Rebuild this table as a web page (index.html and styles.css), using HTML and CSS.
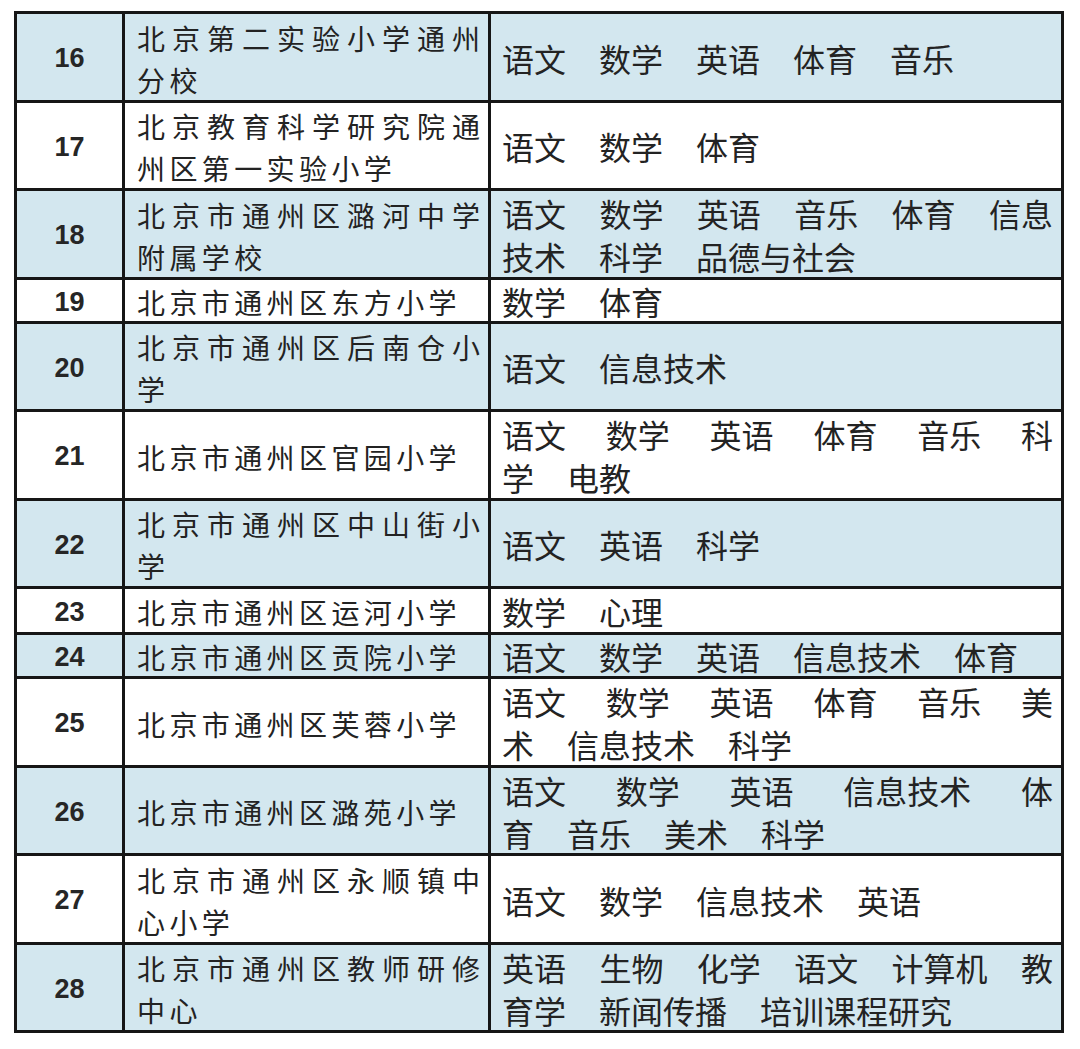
FILE: index.html
```html
<!DOCTYPE html>
<html lang="zh-CN">
<head>
<meta charset="utf-8">
<title>通州区学校学科表</title>
<link rel="stylesheet" href="styles.css">
</head>
<body>
<div class="sheet">
  <div class="c num b">16</div>
  <div class="c name b"><span class="jl">北京第二实验小学通州</span><span class="ln">分校</span></div>
  <div class="c subj b"><div class="sl"><span>语文</span><span>数学</span><span>英语</span><span>体育</span><span>音乐</span></div></div>

  <div class="c num w">17</div>
  <div class="c name w"><span class="jl">北京教育科学研究院通</span><span class="ln">州区第一实验小学</span></div>
  <div class="c subj w"><div class="sl"><span>语文</span><span>数学</span><span>体育</span></div></div>

  <div class="c num b">18</div>
  <div class="c name b"><span class="jl">北京市通州区潞河中学</span><span class="ln">附属学校</span></div>
  <div class="c subj b"><div class="sl j"><span>语文</span><span>数学</span><span>英语</span><span>音乐</span><span>体育</span><span>信息</span></div><div class="sl"><span>技术</span><span>科学</span><span>品德与社会</span></div></div>

  <div class="c num w">19</div>
  <div class="c name w"><span class="ln">北京市通州区东方小学</span></div>
  <div class="c subj w"><div class="sl"><span>数学</span><span>体育</span></div></div>

  <div class="c num b">20</div>
  <div class="c name b"><span class="jl">北京市通州区后南仓小</span><span class="ln">学</span></div>
  <div class="c subj b"><div class="sl"><span>语文</span><span>信息技术</span></div></div>

  <div class="c num w">21</div>
  <div class="c name w"><span class="ln">北京市通州区官园小学</span></div>
  <div class="c subj w"><div class="sl j"><span>语文</span><span>数学</span><span>英语</span><span>体育</span><span>音乐</span><span>科</span></div><div class="sl"><span>学</span><span>电教</span></div></div>

  <div class="c num b">22</div>
  <div class="c name b"><span class="jl">北京市通州区中山街小</span><span class="ln">学</span></div>
  <div class="c subj b"><div class="sl"><span>语文</span><span>英语</span><span>科学</span></div></div>

  <div class="c num w">23</div>
  <div class="c name w"><span class="ln">北京市通州区运河小学</span></div>
  <div class="c subj w"><div class="sl"><span>数学</span><span>心理</span></div></div>

  <div class="c num b">24</div>
  <div class="c name b"><span class="ln">北京市通州区贡院小学</span></div>
  <div class="c subj b"><div class="sl"><span>语文</span><span>数学</span><span>英语</span><span>信息技术</span><span>体育</span></div></div>

  <div class="c num w">25</div>
  <div class="c name w"><span class="ln">北京市通州区芙蓉小学</span></div>
  <div class="c subj w"><div class="sl j"><span>语文</span><span>数学</span><span>英语</span><span>体育</span><span>音乐</span><span>美</span></div><div class="sl"><span>术</span><span>信息技术</span><span>科学</span></div></div>

  <div class="c num b">26</div>
  <div class="c name b"><span class="ln">北京市通州区潞苑小学</span></div>
  <div class="c subj b"><div class="sl j"><span>语文</span><span>数学</span><span>英语</span><span>信息技术</span><span>体</span></div><div class="sl"><span>育</span><span>音乐</span><span>美术</span><span>科学</span></div></div>

  <div class="c num w">27</div>
  <div class="c name w"><span class="jl">北京市通州区永顺镇中</span><span class="ln">心小学</span></div>
  <div class="c subj w"><div class="sl"><span>语文</span><span>数学</span><span>信息技术</span><span>英语</span></div></div>

  <div class="c num b">28</div>
  <div class="c name b"><span class="jl">北京市通州区教师研修</span><span class="ln">中心</span></div>
  <div class="c subj b"><div class="sl j"><span>英语</span><span>生物</span><span>化学</span><span>语文</span><span>计算机</span><span>教</span></div><div class="sl"><span>育学</span><span>新闻传播</span><span>培训课程研究</span></div></div>
</div>
</body>
</html>
```

FILE: styles.css
```css
html, body {
  margin: 0;
  padding: 0;
  background: #ffffff;
}

body {
  font-family: "Noto Sans CJK SC", "Noto Sans", sans-serif;
  color: #232323;
}

.sheet {
  display: grid;
  grid-template-columns: 105px 363px 570px;
  grid-template-rows: 86px 85px 86px 41px 85px 86px 85px 43px 41px 86px 85px 86px 85px;
  gap: 3px;
  padding: 3px;
  background: #161616;
  width: max-content;
  margin: 11px 0 0 14px;
}

.c {
  display: flex;
  flex-direction: column;
  justify-content: center;
  box-sizing: border-box;
  min-height: 0;
}

.b {
  background: #d3e7ef;
}

.w {
  background: #ffffff;
}

.num {
  align-items: center;
  padding-top: 3px;
  font-family: "Liberation Sans", Arial, sans-serif;
  font-weight: 700;
  font-size: 27px;
  color: #262626;
}

.name {
  padding-left: 12px;
  padding-right: 8px;
  padding-top: 3px;
  font-size: 28px;
  line-height: 42px;
}

.name .jl {
  display: block;
  text-align: justify;
  text-align-last: justify;
  letter-spacing: 0;
  white-space: nowrap;
}

.name .ln {
  display: block;
  letter-spacing: 4.4px;
  white-space: nowrap;
}

.subj {
  padding-left: 11px;
  padding-right: 8px;
  padding-top: 2px;
  font-size: 32px;
  line-height: 43px;
}

.sl {
  display: flex;
  gap: 33px;
  white-space: nowrap;
}

.sl.j {
  justify-content: space-between;
  gap: 0;
}
```
